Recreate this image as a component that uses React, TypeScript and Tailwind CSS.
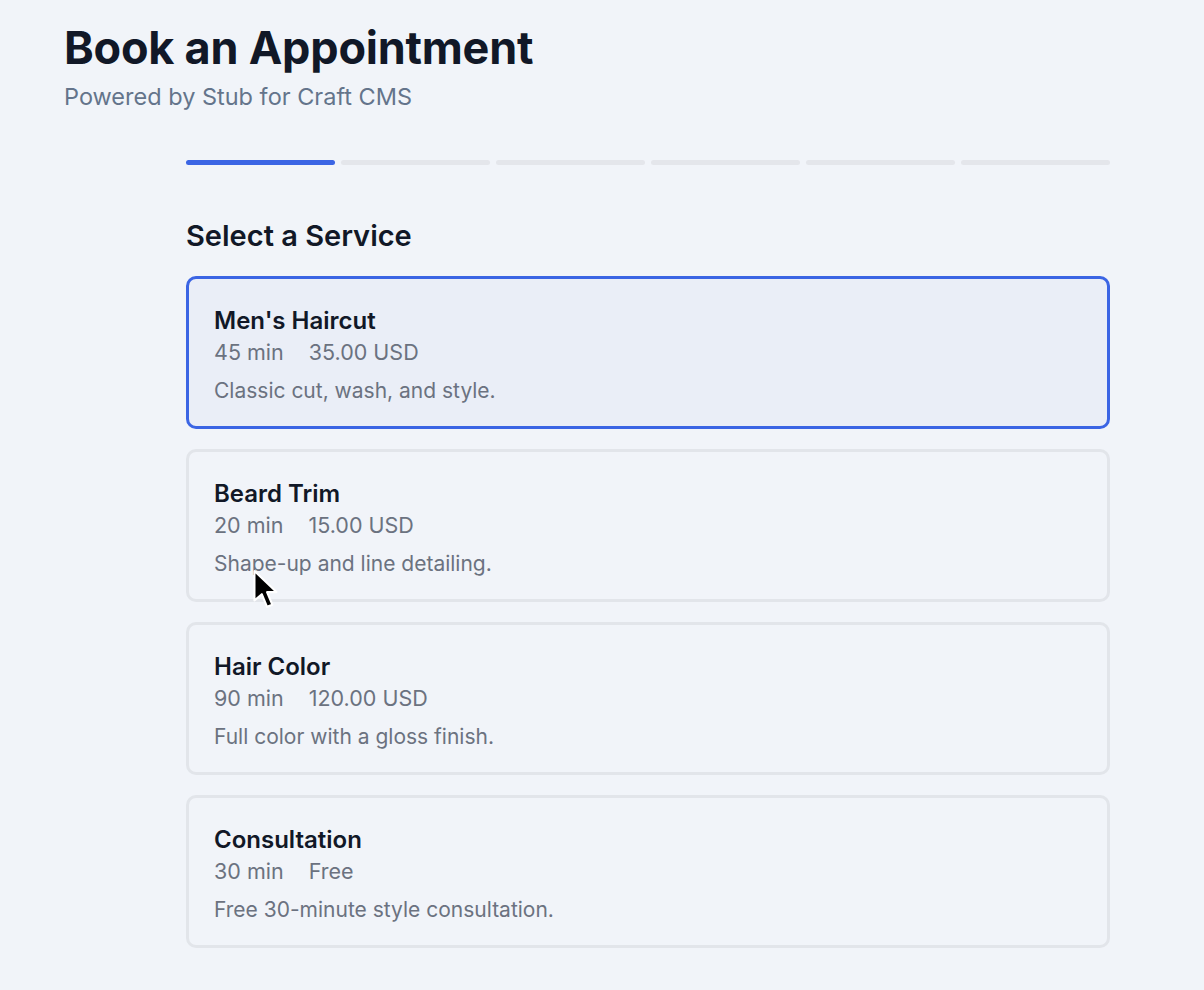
import { useState } from "react";

const services = [
  { name: "Men's Haircut", duration: "45 min", price: "35.00 USD", description: "Classic cut, wash, and style." },
  { name: "Beard Trim", duration: "20 min", price: "15.00 USD", description: "Shape-up and line detailing." },
  { name: "Hair Color", duration: "90 min", price: "120.00 USD", description: "Full color with a gloss finish." },
  { name: "Consultation", duration: "30 min", price: "Free", description: "Free 30-minute style consultation." },
];

const steps = [0, 1, 2, 3, 4, 5];

export default function App() {
  const [selected, setSelected] = useState(0);

  return (
    <div className="relative min-h-[990px] bg-[#f1f4f9] font-['Inter','Liberation_Sans',sans-serif] antialiased">
      {/* Header */}
      <header className="px-[64px] pt-[23px]">
        <h1 className="text-[45px] leading-[50px] font-bold tracking-[-0.005em] text-[#111827]">
          Book an Appointment
        </h1>
        <p className="mt-[9px] text-[23.5px] leading-[30px] text-[#64748b]">Powered by Stub for Craft CMS</p>
      </header>

      <main className="ml-[186px] mr-[94px] mt-[48px]">
        {/* Progress */}
        <div className="flex gap-[6px]">
          {steps.map((s) => (
            <div
              key={s}
              className={s === 0 ? "h-[5px] flex-1 rounded-full bg-[#3b65e4]" : "h-[5px] flex-1 rounded-full bg-[#e4e6eb]"}
            />
          ))}
        </div>

        <h2 className="mt-[53px] text-[29px] leading-[36px] font-semibold text-[#111827]">Select a Service</h2>

        <div className="mt-[22px] flex flex-col gap-[20px]">
          {services.map((service, index) => (
            <button
              key={service.name}
              onClick={() => setSelected(index)}
              className={
                index === selected
                  ? "block w-full rounded-[10px] border-[3px] border-[#3b65e4] bg-[#eaeef7] px-[25px] pt-[26.5px] pb-[21.5px] text-left"
                  : "block w-full rounded-[10px] border-[3px] border-[#e2e5ea] bg-[#f1f4f9] px-[25px] pt-[26.5px] pb-[21.5px] text-left"
              }
            >
              <div className="text-[24px] leading-[30px] font-semibold text-[#111827]">{service.name}</div>
              <div className="mt-[2px] flex gap-[25px] text-[21.5px] leading-[28px] text-[#6b7280]">
                <span>{service.duration}</span>
                <span>{service.price}</span>
              </div>
              <p className="mt-[11px] text-[21px] leading-[28px] text-[#6b7280]">{service.description}</p>
            </button>
          ))}
        </div>
      </main>

      {/* Mouse pointer */}
      <svg
        className="pointer-events-none absolute left-[252px] top-[569px]"
        width="28"
        height="42"
        viewBox="0 0 26 40"
      >
        <path
          d="M2 2 L2 30 L9 24 L14 36 L19 34 L14 22 L23 22 Z"
          fill="#000"
          stroke="#fff"
          strokeWidth="2"
          strokeLinejoin="round"
        />
      </svg>
    </div>
  );
}
